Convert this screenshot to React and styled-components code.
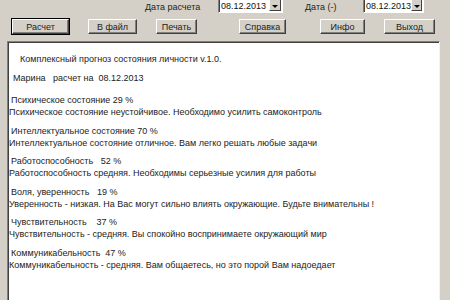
import React from "react";
import styled, { createGlobalStyle } from "styled-components";

const Global = createGlobalStyle`
  html, body { margin: 0; padding: 0; background: #d4d0c8; }
  body { font-family: "Liberation Sans", Arial, sans-serif; }
`;

const Window = styled.div`
  width: 450px;
  height: 300px;
  background: #d4d0c8;
  display: flex;
  flex-direction: column;
  overflow: hidden;
  font-family: "Liberation Sans", Arial, sans-serif;
  font-size: 9px;
  color: #1a1a1a;
`;

const TopRow = styled.div`
  display: flex;
  align-items: center;
  height: 16px;
  margin-top: -3px;
  flex-shrink: 0;
`;

const Label = styled.span`
  margin-left: ${(p) => p.$ml}px;
  width: ${(p) => p.$w}px;
  font-size: 9px;
  color: #222;
  padding-top: 3px;
`;

const Combo = styled.div`
  width: ${(p) => p.$w}px;
  height: 16px;
  box-sizing: border-box;
  display: flex;
  background: #fff;
  border-top: 1px solid #808080;
  border-left: 1px solid #808080;
  border-right: 1px solid #fff;
  border-bottom: 1px solid #fff;
  box-shadow: inset 1px 1px 0 #404040;
`;

const ComboText = styled.span`
  flex: 1;
  padding-left: 2px;
  padding-top: 3px;
  font-size: 9px;
  color: #111;
`;

const ComboBtn = styled.div`
  width: 12px;
  box-sizing: border-box;
  margin: 1px 1px 1px 0;
  background: #d4d0c8;
  border-top: 1px solid #fff;
  border-left: 1px solid #fff;
  border-right: 1px solid #404040;
  border-bottom: 1px solid #404040;
  display: flex;
  align-items: center;
  justify-content: center;
  padding-top: 2px;
`;

const Arrow = styled.span`
  width: 0;
  height: 0;
  border-left: 3px solid transparent;
  border-right: 3px solid transparent;
  border-top: 3px solid #000;
`;

const ButtonRow = styled.div`
  display: flex;
  margin-top: 6px;
  height: 15px;
  flex-shrink: 0;
`;

const Button = styled.div`
  width: ${(p) => p.$w}px;
  margin-left: ${(p) => p.$ml}px;
  height: 15px;
  box-sizing: border-box;
  background: #d4d0c8;
  border-top: 1px solid #fff;
  border-left: 1px solid #fff;
  border-right: 1px solid #404040;
  border-bottom: 1px solid #404040;
  box-shadow: ${(p) =>
    p.$default
      ? "0 0 0 1px #000, inset -1px -1px 0 #808080"
      : "inset -1px -1px 0 #808080"};
  display: flex;
  align-items: center;
  justify-content: center;
  font-size: 9px;
  color: #222;
`;

const Panel = styled.div`
  flex: 1;
  margin-top: 7px;
  margin-left: 7px;
  width: 433px;
  box-sizing: border-box;
  background: #fff;
  border-top: 1px solid #808080;
  border-left: 1px solid #808080;
  border-right: 1px solid #f4f3f0;
  box-shadow: inset 1px 1px 0 #404040;
  padding: 11px 0 0 1px;
  font-size: 9px;
  line-height: 12px;
  color: #222;
`;

const Line = styled.div`
  white-space: pre;
  padding-left: ${(p) => p.$pl || 0}px;
  margin-top: ${(p) => p.$mt || 0}px;
`;

const Block = styled.div`
  margin-top: ${(p) => p.$mt}px;
`;

const blocks = [
  ["Психическое состояние 29 %", "Психическое состояние неустойчивое. Необходимо усилить самоконтроль"],
  ["Интеллектуальное состояние 70 %", "Интеллектуальное состояние отличное. Вам легко решать любые задачи"],
  ["Работоспособность   52 %", "Работоспособность средняя. Необходимы серьезные усилия для работы"],
  ["Воля, уверенность   19 %", "Уверенность - низкая. На Вас могут сильно влиять окружающие. Будьте внимательны !"],
  ["Чувствительность    37 %", "Чувствительность - средняя. Вы спокойно воспринимаете окружающий мир"],
  ["Коммуникабельность  47 %", "Коммуникабельность - средняя. Вам общаетесь, но это порой Вам надоедает"],
];

export default function App() {
  return (
    <>
      <Global />
      <Window>
        <TopRow>
          <Label $ml={145} $w={73}>Дата расчета</Label>
          <Combo $w={65}>
            <ComboText>08.12.2013</ComboText>
            <ComboBtn><Arrow /></ComboBtn>
          </Combo>
          <Label $ml={22} $w={58}>Дата (-)</Label>
          <Combo $w={61}>
            <ComboText>08.12.2013</ComboText>
            <ComboBtn><Arrow /></ComboBtn>
          </Combo>
        </TopRow>
        <ButtonRow>
          <Button $default $ml={12} $w={57}>Расчет</Button>
          <Button $ml={19} $w={49}>В файл</Button>
          <Button $ml={19} $w={41}>Печать</Button>
          <Button $ml={42} $w={47}>Справка</Button>
          <Button $ml={34} $w={45}>Инфо</Button>
          <Button $ml={19} $w={51}>Выход</Button>
        </ButtonRow>
        <Panel>
          <Line $pl={11}>Комплексный прогноз состояния личности v.1.0.</Line>
          <Line $pl={4} $mt={7}>Марина   расчет на  08.12.2013</Line>
          {blocks.map(([h, d], i) => (
            <Block key={i} $mt={i === 0 ? 10 : 6.5}>
              <Line $pl={2}>{h}</Line>
              <Line>{d}</Line>
            </Block>
          ))}
        </Panel>
      </Window>
    </>
  );
}
